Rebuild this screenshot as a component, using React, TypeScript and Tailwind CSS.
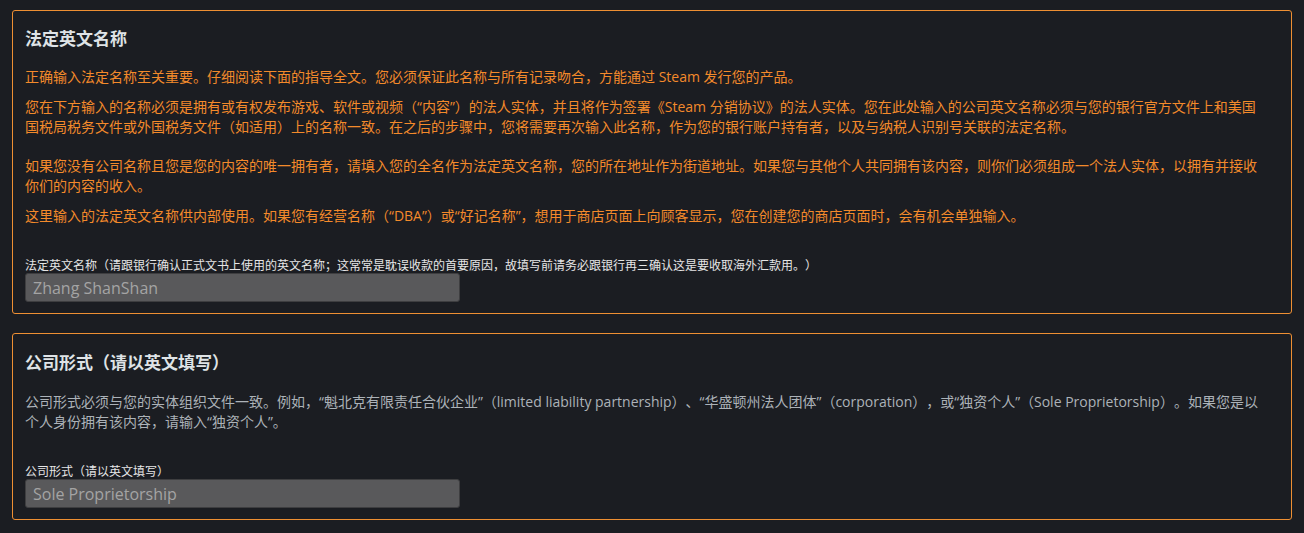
import { useState } from 'react';

const body = '"Open Sans", "Noto Sans CJK SC", sans-serif';

function Field({ label, value }: { label: string; value: string }) {
    const [v, setV] = useState(value);
    return (
        <div className="mt-[31px]">
            <label className="block text-[12px] leading-4 text-[#e6e6e6]" style={{ fontFamily: '"Noto Sans CJK SC", sans-serif' }}>{label}</label>
            <input
                value={v}
                onChange={(e) => setV(e.target.value)}
                className="block w-[435px] h-[29px] px-[7px] bg-[#59595b] border border-[#3e3e40] rounded-[3px] text-[16px] text-[#a4a4a4] outline-none"
                style={{ fontFamily: '"Open Sans", sans-serif' }}
            />
        </div>
    );
}

export default function App() {
    return (
        <div className="min-h-screen bg-[#1b1d22] pt-[10px] px-[12px] pb-4 [text-spacing-trim:space-all]" style={{ fontFamily: body }}>
            {/* Legal name */}
            <section className="w-[1280px] border border-[#ee8f33] rounded-[3px] pt-4 pb-[11px] pl-[12px] pr-[26px]">
                <h2 className="text-[17px] leading-6 font-bold text-[#dfe3e6]">法定英文名称</h2>
                <div className="mt-4 text-[14px] leading-5 text-[#f38a2b]">
                    <p>正确输入法定名称至关重要。仔细阅读下面的指导全文。您必须保证此名称与所有记录吻合，方能通过 Steam 发行您的产品。</p>
                    <p className="mt-[10px]">
                        您在下方输入的名称必须是拥有或有权发布游戏、软件或视频（“内容”）的法人实体，并且将作为签署《Steam 分销协议》的法人实体。您在此处输入的公司英文名称必须与您的银行官方文件上和美国国税局税务文件或外国税务文件（如适用）上的名称一致。在之后的步骤中，您将需要再次输入此名称，作为您的银行账户持有者，以及与纳税人识别号关联的法定名称。
                    </p>
                    <p className="mt-[19px]">
                        如果您没有公司名称且您是您的内容的唯一拥有者，请填入您的全名作为法定英文名称，您的所在地址作为街道地址。如果您与其他个人共同拥有该内容，则你们必须组成一个法人实体，以拥有并接收你们的内容的收入。
                    </p>
                    <p className="mt-[10px]">
                        这里输入的法定英文名称供内部使用。如果您有经营名称（“DBA”）或“好记名称”，想用于商店页面上向顾客显示，您在创建您的商店页面时，会有机会单独输入。
                    </p>
                </div>
                <Field
                    label="法定英文名称（请跟银行确认正式文书上使用的英文名称；这常常是耽误收款的首要原因，故填写前请务必跟银行再三确认这是要收取海外汇款用。）"
                    value="Zhang ShanShan"
                />
            </section>

            {/* Company form */}
            <section className="w-[1280px] mt-[19px] border border-[#ee8f33] rounded-[3px] pt-[17px] pb-[11px] pl-[12px] pr-[26px]">
                <h2 className="text-[17px] leading-6 font-bold text-[#dfe3e6]">公司形式（请以英文填写）</h2>
                <p className="mt-[17px] text-[14px] leading-5 text-[#acb2b8]">
                    公司形式必须与您的实体组织文件一致。例如，“魁北克有限责任合伙企业”（limited liability partnership）、“华盛顿州法人团体”（corporation），或“独资个人”（Sole Proprietorship）。如果您是以个人身份拥有该内容，请输入“独资个人”。
                </p>
                <Field label="公司形式（请以英文填写）" value="Sole Proprietorship" />
            </section>
        </div>
    );
}
